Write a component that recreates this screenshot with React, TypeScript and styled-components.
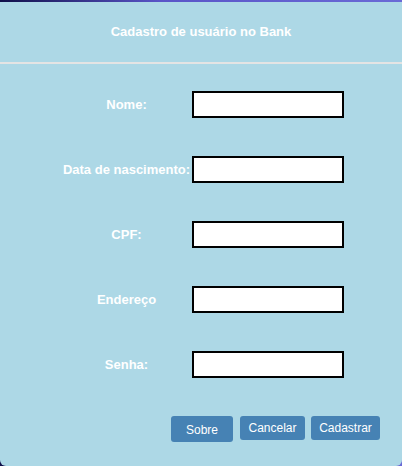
import React from "react";
import styled, { createGlobalStyle } from "styled-components";

const Global = createGlobalStyle`
  html, body { margin: 0; padding: 0; }
  body {
    width: 402px;
    height: 466px;
    overflow: hidden;
    background: linear-gradient(to right, #10104a, #5a55c8 40%, #6a6ad6);
    font-family: "Liberation Sans", Arial, sans-serif;
  }
`;

const Card = styled.div`
  margin-top: 2px;
  height: 464px;
  box-sizing: border-box;
  background: #add8e6;
  border-radius: 0 0 6px 6px;
  display: flex;
  flex-direction: column;
`;

const Header = styled.div`
  height: 60px;
  display: flex;
  align-items: center;
  justify-content: center;
  border-bottom: 2px solid #e4e4e4;
`;

const Title = styled.h1`
  margin: 0;
  font-size: 13px;
  font-weight: bold;
  color: #ffffff;
  padding-bottom: 2px;
`;

const Form = styled.div`
  display: grid;
  grid-template-columns: auto auto;
  justify-content: center;
  column-gap: 2px;
  row-gap: 38px;
  margin-top: 27px;
  padding-left: 5px;
`;

const Label = styled.label`
  color: #ffffff;
  font-size: 13px;
  font-weight: bold;
  text-align: center;
  display: flex;
  align-items: center;
  justify-content: center;
`;

const Input = styled.input`
  width: 152px;
  height: 27px;
  box-sizing: border-box;
  border: 2px solid #000000;
  background: #ffffff;
  margin: 0;
  padding: 0 4px;
  outline: none;
`;

const Actions = styled.div`
  display: flex;
  justify-content: flex-end;
  align-items: flex-start;
  gap: 6px;
  margin-top: auto;
  padding: 0 22px 24px 0;
`;

const Button = styled.button<{ $tall?: boolean; $w: number }>`
  background: #4682b4;
  color: #ffffff;
  border: none;
  border-radius: 3px;
  font-family: "Liberation Sans", Arial, sans-serif;
  font-size: 12px;
  height: ${(p) => (p.$tall ? "26px" : "24px")};
  padding: ${(p) => (p.$tall ? "2px 0 0" : "0")};
  width: ${(p) => p.$w}px;
  margin-right: ${(p) => (p.$tall ? "1px" : "0")};
  cursor: pointer;
`;

const fields = ["Nome:", "Data de nascimento:", "CPF:", "Endereço", "Senha:"];

export default function App() {
  return (
    <>
      <Global />
      <Card>
        <Header>
          <Title>Cadastro de usuário no Bank</Title>
        </Header>
        <Form>
          {fields.map((f) => (
            <React.Fragment key={f}>
              <Label>{f}</Label>
              <Input type={f === "Senha:" ? "password" : "text"} />
            </React.Fragment>
          ))}
        </Form>
        <Actions>
          <Button $tall $w={62}>Sobre</Button>
          <Button $w={65}>Cancelar</Button>
          <Button $w={69}>Cadastrar</Button>
        </Actions>
      </Card>
    </>
  );
}
